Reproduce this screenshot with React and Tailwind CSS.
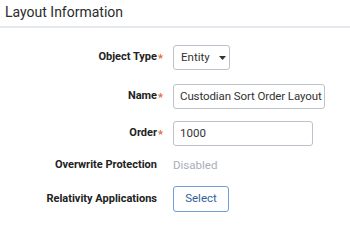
export default function App() {
  const font = { fontFamily: "Roboto, 'Liberation Sans', sans-serif" };
  return (
    <div className="w-[350px] h-[227px] bg-white overflow-hidden" style={font}>
      <div className="h-[28px] px-[5px] pt-[3px] border-b-2 border-[#e6e9f0] text-[14px] leading-[18px] text-[#2b2b2b]">
        Layout Information
      </div>
      <div className="grid grid-cols-[157px_16px_1fr] items-center pt-[17px] text-[11px]">
        <div className="text-right font-bold text-[#222]">Object Type</div>
        <div className="text-[#e8642a] font-bold pl-[1px] self-start mt-[6px]">*</div>
        <div className="h-[25px] w-[57px] border border-[#bcc2cc] rounded-[3px] flex items-center pl-[7px] text-[11.5px] text-[#333]">
          Entity
          <svg className="ml-[9px]" width="7" height="4" viewBox="0 0 7 4">
            <path d="M0 0h7L3.5 4z" fill="#333" />
          </svg>
        </div>

        <div className="text-right font-bold text-[#222] mt-[14px]">Name</div>
        <div className="text-[#e8642a] font-bold pl-[1px] self-start mt-[20px]">*</div>
        <div className="h-[25px] w-[152px] border border-[#bcc2cc] rounded-[3px] flex items-center pl-[6px] text-[11.5px] tracking-[-0.1px] text-[#333] mt-[14px] overflow-hidden whitespace-nowrap">
          Custodian Sort Order Layout
        </div>

        <div className="text-right font-bold text-[#222] mt-[12px]">Order</div>
        <div className="text-[#e8642a] font-bold pl-[1px] self-start mt-[18px]">*</div>
        <div className="h-[25px] w-[140px] border border-[#bcc2cc] rounded-[3px] flex items-center pl-[6px] text-[11.5px] text-[#333] mt-[12px]">
          1000
        </div>

        <div className="text-right font-bold text-[#222] mt-[8px] h-[22px] leading-[22px]">Overwrite Protection</div>
        <div />
        <div className="text-[11.5px] text-[#a7aebb] mt-[8px] h-[22px] leading-[22px]">Disabled</div>

        <div className="text-right font-bold text-[#222] mt-[10px]">Relativity Applications</div>
        <div />
        <div className="mt-[10px]">
          <button className="h-[26px] w-[56px] border border-[#6f9fd3] rounded-[3px] text-[11.5px] text-[#2f5f9c] bg-white">
            Select
          </button>
        </div>
      </div>
    </div>
  );
}
